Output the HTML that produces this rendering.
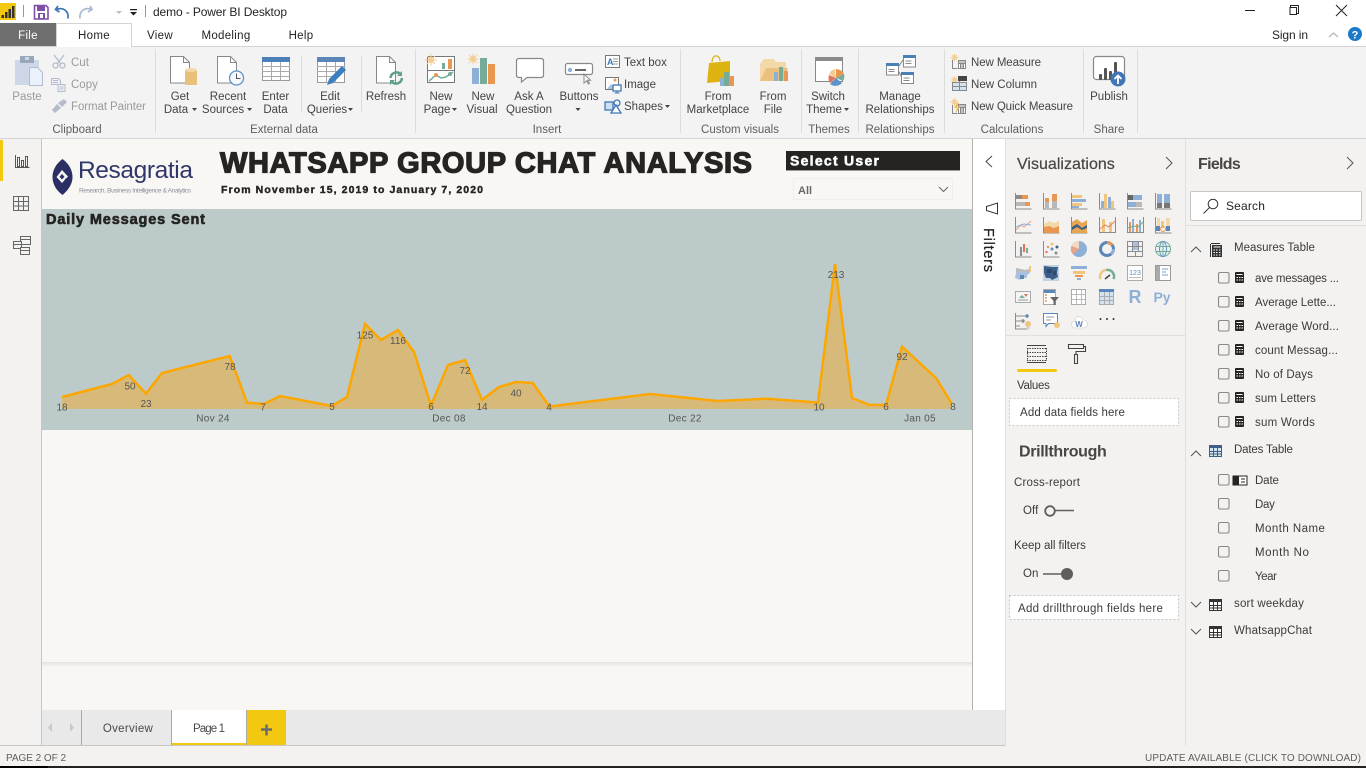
<!DOCTYPE html>
<html><head><meta charset="utf-8"><title>demo - Power BI Desktop</title>
<style>
html,body{margin:0;padding:0;width:1366px;height:768px;overflow:hidden;background:#fff}
svg{display:block;position:absolute;left:0;top:0}
text{font-family:"Liberation Sans",Arial,sans-serif;font-size:11.5px;fill:#444;letter-spacing:0}
.m{text-anchor:middle}
.d{fill:#252423}
.l{fill:#9a9a9a}
.g{fill:#605e5c}
.t{letter-spacing:.3px}
.f{fill:#3b3a39;font-size:11.5px;letter-spacing:.1px}
.h{font-size:16px;font-weight:bold;fill:#484644;letter-spacing:.2px}
.v{font-size:10px;fill:#555;letter-spacing:0}
.blk{font-weight:bold;fill:#252423;stroke:#252423}
</style></head><body>
<svg width="1366" height="768" viewBox="0 0 1366 768" fill="none">
<defs><linearGradient id="sh" x1="0" y1="0" x2="0" y2="1"><stop offset="0" stop-color="#e4e2de"/><stop offset="1" stop-color="#f8f7f3"/></linearGradient></defs>
<!-- backgrounds -->
<rect width="1366" height="768" fill="#fff"/>
<rect x="0" y="47" width="1366" height="91" fill="#f3f3f3"/>
<rect x="0" y="46" width="1366" height="1" fill="#d4d4d4"/>
<rect x="0" y="138" width="1366" height="1" fill="#d4d4d4"/>
<rect x="0" y="139" width="41" height="607" fill="#f3f2f1"/>
<rect x="41" y="139" width="1" height="607" fill="#c8c6c4"/>
<rect x="42" y="139" width="930" height="571" fill="#f8f7f3"/>
<rect x="972" y="139" width="1" height="571" fill="#b3b0ad"/>
<rect x="973" y="139" width="32" height="607" fill="#fff"/>
<rect x="1005" y="139" width="361" height="607" fill="#f3f2f1"/>
<rect x="1005" y="139" width="1" height="607" fill="#e1dfdd"/>
<rect x="1185" y="139" width="1" height="607" fill="#e1dfdd"/>
<rect x="0" y="746" width="1366" height="20" fill="#f3f2f1"/>
<rect x="0" y="745" width="1005" height="1" fill="#c8c6c4"/>
<rect x="0" y="766" width="1366" height="2" fill="#222"/>
<rect x="0" y="766" width="48" height="2" fill="#000"/>
<!-- page shadow -->
<rect x="42" y="662" width="930" height="5" fill="url(#sh)"/>

<!-- title bar -->
<rect x="0" y="3" width="16" height="17" fill="#f2c811"/>
<path d="M1.500 15h2.500v3H1.500zM5 12h2.500v6H5zM8.500 9h2.500v9H8.500zM12 6h2.500v12H12z" fill="#333"/>
<rect x="23" y="5" width="1" height="12" fill="#999"/>
<path d="M34.500 5.500h11.500l2 2v11.500h-13.500z" stroke="#7d4fa8" stroke-width="1.600"/>
<rect x="37" y="6" width="8" height="5" fill="#7d4fa8"/><rect x="38" y="13" width="7" height="6" fill="#7d4fa8"/><rect x="40" y="14" width="3" height="4" fill="#fff"/>
<path d="M58 6l-2.500 3.500 4 2.500M56 9.500c7-2.500 13 1 12 9" stroke="#3f78b5" stroke-width="1.800"/>
<path d="M90 6l2 3.500-4 2.500M92 9.500c-7-2.500-13 1-12 9" stroke="#a9bcd3" stroke-width="1.800"/>
<path d="M116 11h6l-3 3z" fill="#bdbdbd"/>
<path d="M130 9h7v1.200h-7zM130 12h7l-3.500 3.500z" fill="#222"/>
<rect x="145" y="5" width="1" height="12" fill="#999"/>
<text x="153" y="16" class="d" style="font-size:12px" textLength="134">demo - Power BI Desktop</text>
<path d="M1245 10.500h10" stroke="#222"/>
<path d="M1290.500 7.500v-2h8v8h-2M1291 7.500h5.500v7h-6.500v-7z" stroke="#222"/>
<path d="M1336 5l11 11M1347 5l-11 11" stroke="#222"/>
<!-- tabs -->
<rect x="0" y="23" width="56" height="23" fill="#6e6e6e"/>
<path d="M56.500 46v-23h75v23" fill="#fff"/>
<path d="M56.500 46.500v-23h75v23" stroke="#d4d4d4"/>
<rect x="57" y="46" width="74" height="1" fill="#fff"/>
<text x="28" y="39" class="m t" style="fill:#fff">File</text>
<text x="94" y="39" class="m d t">Home</text>
<text x="160" y="39" class="m d t">View</text>
<text x="226" y="39" class="m d t">Modeling</text>
<text x="301" y="39" class="m d t">Help</text>
<text x="1272" y="39" class="d" style="font-size:12px" textLength="36">Sign in</text>
<path d="M1329 37l4.500-4 4.500 4" stroke="#b5b5b5" stroke-width="1.200"/>
<circle cx="1355" cy="34" r="7" fill="#1c79c9"/>
<text x="1355" y="38.500" class="m" style="fill:#fff;font-weight:bold;font-size:11px">?</text>

<!-- ribbon separators -->
<path d="M155.500 49v84M415.500 49v84M680.500 49v84M801.500 49v84M858.500 49v84M944.500 49v84M1083.500 49v84M1137.500 49v84" stroke="#dcdcdc"/>
<path d="M301.500 56v56M361.500 56v56" stroke="#dcdcdc"/>

<!-- clipboard group -->
<rect x="15" y="60" width="24" height="25" fill="#cdd7e8"/>
<rect x="20" y="56" width="14" height="7" fill="#9aa6ba"/><rect x="25" y="57" width="4" height="3" fill="#cdd7e8"/>
<path d="M29.500 67.500h8l5 5v13h-13z" fill="#eaf1fb" stroke="#b3bdd0"/>
<g stroke="#b4bccb" stroke-width="1.300"><circle cx="55.500" cy="65.500" r="2.500"/><circle cx="62.500" cy="65.500" r="2.500"/><path d="M54 55l7 9M64 55l-7 9"/></g>
<path d="M51.500 78.500h7l2 2v4h-9zM58 84.500h7v7h-7z" stroke="#b4bccb" fill="#eef2f8"/>
<path d="M53 80.500h5M53 82.500h5M59.500 87h4M59.500 89h4" stroke="#b4bccb"/>
<path d="M52 110l5-6 4 4-6 5zM58 103l6-4 3 3-5 5z" fill="#b4bccb"/>
<!-- doc icons -->
<path d="M170.500 56.500h13l6 6v20.500h-19z" stroke="#888" fill="#fff"/><path d="M183.500 56.500v6h6" stroke="#888"/>
<rect x="185" y="70" width="12" height="15" rx="1" fill="#e8c07a"/><ellipse cx="191" cy="70" rx="6" ry="2" fill="#f3d9a8"/>
<path d="M217.500 56.500h13l6 6v20.500h-19z" stroke="#888" fill="#fff"/><path d="M230.500 56.500v6h6" stroke="#888"/>
<circle cx="236.500" cy="78" r="7" fill="#f5f8fc" stroke="#5b93c9" stroke-width="1.300"/><path d="M236.500 73.500v5h4" stroke="#555"/>
<rect x="262.500" y="57.500" width="27" height="23" fill="#fff" stroke="#999"/><rect x="262" y="57" width="28" height="5" fill="#4a7fb8"/>
<path d="M262 66.500h28M262 71.500h28M262 76.500h28M271.500 62v19M280.500 62v19" stroke="#aaa"/>
<rect x="317.500" y="57.500" width="27" height="25" fill="#fff" stroke="#999"/><rect x="317" y="57" width="28" height="5" fill="#5b86b8"/>
<path d="M317 66.500h28M317 71.500h28M317 76.500h20M326.500 62v21M335.500 62v21" stroke="#aaa"/>
<path d="M327 85l2-6 13-13 4 4-13 13z" fill="#3c7fc0"/>
<path d="M376.500 56.500h13l6 6v20.500h-19z" stroke="#888" fill="#fff"/><path d="M389.500 56.500v6h6" stroke="#888"/>
<path d="M390.500 78a6 6 0 0 1 10-4M402 78a6 6 0 0 1-10 4" stroke="#5fa08a" stroke-width="2.500"/><path d="M402 71v5h-5zM390 85v-5h5z" fill="#5fa08a"/>
<!-- insert icons -->
<rect x="427.500" y="56.500" width="27" height="26" fill="#fff" stroke="#777"/><path d="M427 70.500h28" stroke="#777"/>
<circle cx="431" cy="60" r="3" fill="#f3cd94"/><path d="M431 54v12M425 60h12M427 56l8 8M435 56l-8 8" stroke="#f3cd94"/>
<rect x="442" y="63" width="3" height="6" fill="#74ac98"/><rect x="448" y="59" width="4" height="10" fill="#ea9550"/>
<path d="M429 81l7-6 5 3 5-1 7-5" stroke="#74ac98" stroke-width="1.500"/><circle cx="436" cy="75" r="2" fill="#ea9550"/><circle cx="450" cy="74" r="2" fill="#74ac98"/>
<circle cx="473" cy="59" r="3" fill="#f3cd94"/><path d="M473 53.500v11M467.500 59h11M469 55l8 8M477 55l-8 8" stroke="#f3cd94"/>
<rect x="472" y="68" width="7" height="16" fill="#8fb0d6"/><rect x="480" y="58" width="7" height="26" fill="#74ac98"/><rect x="488" y="64" width="7" height="20" fill="#ea9550"/>
<path d="M519 58.500h22q2.500 0 2.500 2.500v14q0 2.500-2.500 2.500h-14l-5.500 4.500v-4.500h-2.500q-2.500 0-2.500-2.500v-14q0-2.500 2.500-2.500z" stroke="#888" fill="#fff" stroke-width="1.200"/>
<rect x="565.500" y="63.500" width="27" height="11" rx="2" fill="#fff" stroke="#888" stroke-width="1.200"/><circle cx="570" cy="70" r="2.200" fill="#8fb0d6"/><path d="M575 70h11" stroke="#666" stroke-width="2"/>
<path d="M584 74v9l2.500-2 2 3 1-.7-2-3h3z" fill="#fff" stroke="#888"/>
<path d="M605.500 55.500h14v12h-14z" fill="#fff" stroke="#777"/><text x="607" y="65" style="font-size:9px;fill:#3f78b5;font-weight:bold">A</text><path d="M613 59h5M613 61.500h5M613 64h5" stroke="#999"/>
<path d="M605.500 77.500h13v12h-13z" fill="#fff" stroke="#777"/><path d="M607 89l4-5 4 5z" fill="#a7c1de"/><circle cx="615" cy="80" r="1.500" fill="#ea9550"/><rect x="613" y="85" width="8" height="6" fill="#fff" stroke="#3f78b5" stroke-width="1.300"/><path d="M617 91v2M614.500 93h5" stroke="#3f78b5"/>
<rect x="605" y="102" width="8" height="8" fill="#cfe0f1" stroke="#3f78b5" stroke-width="1.300"/><circle cx="617" cy="103" r="3" fill="none" stroke="#3f78b5" stroke-width="1.300"/><path d="M611 113l5-8 5 8z" fill="#fff" stroke="#3f78b5" stroke-width="1.300"/>
<!-- custom visuals -->
<path d="M709 63l21-2 0 20-23 2z" fill="#dcb310"/><path d="M712 62c0-8 8-8 8-1" stroke="#dcb310" stroke-width="1.200"/>
<rect x="720" y="78" width="4" height="8" fill="#8fb0d6"/><rect x="724" y="72" width="5" height="14" fill="#74ac98"/><rect x="729" y="76" width="5" height="10" fill="#ea9550"/>
<path d="M760 81v-17l4-5h10l2 3h10v19z" fill="#f3d9a8"/><path d="M760 81l6-13h22l-5 13z" fill="#ecc17f"/>
<rect x="774" y="72" width="4" height="9" fill="#8fb0d6"/><rect x="779" y="67" width="4" height="14" fill="#74ac98"/><rect x="784" y="71" width="4" height="10" fill="#ea9550"/>
<!-- themes / relations -->
<rect x="815.500" y="57.500" width="27" height="24" fill="#fff" stroke="#888"/><rect x="815" y="57" width="28" height="4" fill="#8a8a8a"/>
<path d="M836 78l0-9a9 9 0 0 1 8 5z" fill="#ea9550"/><path d="M836 78l8-4a9 9 0 0 1-1 7z" fill="#74ac98"/><path d="M836 78l6 5a9 9 0 0 1-12 1z" fill="#5b93c9"/><path d="M836 78l-6 5a9 9 0 0 1-1-8z" fill="#e0735a"/><path d="M836 78l-7-4a9 9 0 0 1 6-5z" fill="#f3cd94"/>
<g stroke="#888" fill="#fff"><rect x="886.500" y="63.500" width="12" height="11.500"/><rect x="903.500" y="55.500" width="12" height="11.500"/><rect x="901.500" y="72.500" width="12" height="11"/></g>
<rect x="886" y="63" width="13" height="3" fill="#4a7fb8"/><rect x="903" y="55" width="13" height="3" fill="#4a7fb8"/><rect x="901" y="72" width="13" height="3" fill="#4a7fb8"/>
<path d="M899 66l4-6M899 72l2 4M888.500 69.500h6M888.500 71.500h6M905.500 61h6M905.500 63.500h6M903.500 78h6M903.500 80.500h6" stroke="#888"/>
<!-- calc icons -->
<circle cx="954.500" cy="57.500" r="2" fill="#f3cd94"/><path d="M954.500 53.500v8M950.500 57.500h8M952 55l5 5M957 55l-5 5" stroke="#f3cd94"/>
<path d="M952.500 60v8.500h5" stroke="#888"/><rect x="958" y="60" width="8" height="9" fill="#888"/><path d="M959 62h6" stroke="#fff"/><path d="M959.500 64v4M962 64v4M964.500 64v4" stroke="#fff"/>
<circle cx="954.500" cy="80" r="2" fill="#f3cd94"/><path d="M954.500 76v8M950.500 80h8M952 77.500l5 5M957 77.500l-5 5" stroke="#f3cd94"/>
<rect x="952.500" y="82.500" width="14" height="8" fill="#d5e3f1" stroke="#888"/><rect x="958" y="76" width="9" height="5" fill="#444"/><path d="M959.500 81v9M952 86.500h14" stroke="#888"/>
<circle cx="954.500" cy="102" r="2" fill="#f3cd94"/><path d="M954.500 98v8M950.500 102h8M952 99.500l5 5M957 99.500l-5 5" stroke="#f3cd94"/>
<path d="M952.500 105v8.500h5" stroke="#888"/><rect x="958" y="104" width="8" height="10" fill="#888"/><path d="M959 106h6M959.500 108v5M962 108v5M964.500 108v5" stroke="#fff"/><path d="M957 103l-3 5h3l-2 6 5-7h-3l2-4z" fill="#edb95e"/>
<!-- publish -->
<rect x="1093.500" y="56.500" width="31" height="23" rx="3" stroke="#888" stroke-width="1.200" fill="#fff"/>
<rect x="1099" y="74" width="3" height="6" fill="#555" rx="1"/><rect x="1104" y="68" width="3" height="12" fill="#555" rx="1"/><rect x="1109" y="71" width="3" height="9" fill="#555" rx="1"/><rect x="1114" y="62" width="3" height="18" fill="#555" rx="1"/>
<circle cx="1118" cy="79" r="7.500" fill="#3f78b5"/><path d="M1118 84v-8M1114.500 79l3.500-3.500 3.500 3.500" stroke="#fff" stroke-width="1.800"/>

<!-- ribbon text -->
<g>
<text x="27" y="100" class="m l">Paste</text>
<text x="71" y="66" class="l">Cut</text><text x="71" y="88" class="l">Copy</text><text x="71" y="110" class="l" textLength="75">Format Painter</text>
<text x="77" y="133" class="m g">Clipboard</text>
<text x="180" y="100" class="m">Get</text><text x="176" y="113" class="m">Data</text><path d="M192 108h5l-2.500 3z" fill="#444"/>
<text x="228" y="100" class="m">Recent</text><text x="223" y="113" class="m">Sources</text><path d="M247 108h5l-2.500 3z" fill="#444"/>
<text x="275.500" y="100" class="m">Enter</text><text x="275.500" y="113" class="m">Data</text>
<text x="330" y="100" class="m">Edit</text><text x="327" y="113" class="m">Queries</text><path d="M348 108h5l-2.500 3z" fill="#444"/>
<text x="386" y="100" class="m">Refresh</text>
<text x="284" y="133" class="m g">External data</text>
<text x="441" y="100" class="m">New</text><text x="437" y="113" class="m">Page</text><path d="M452 108h5l-2.500 3z" fill="#444"/>
<text x="483" y="100" class="m">New</text><text x="482" y="113" class="m">Visual</text>
<text x="529" y="100" class="m">Ask A</text><text x="529" y="113" class="m">Question</text>
<text x="579" y="100" class="m">Buttons</text><path d="M575.500 108h5l-2.500 3z" fill="#444"/>
<text x="624" y="66">Text box</text><text x="624" y="88">Image</text><text x="624" y="110">Shapes</text><path d="M665 105h5l-2.500 3z" fill="#444"/>
<text x="547" y="133" class="m g">Insert</text>
<text x="718" y="100" class="m">From</text><text x="718" y="113" class="m">Marketplace</text>
<text x="773" y="100" class="m">From</text><text x="773" y="113" class="m">File</text>
<text x="740" y="133" class="m g">Custom visuals</text>
<text x="828" y="100" class="m">Switch</text><text x="824" y="113" class="m">Theme</text><path d="M844 108h5l-2.500 3z" fill="#444"/>
<text x="829" y="133" class="m g">Themes</text>
<text x="900" y="100" class="m">Manage</text><text x="900" y="113" class="m">Relationships</text>
<text x="900" y="133" class="m g">Relationships</text>
<text x="971" y="66" textLength="70">New Measure</text><text x="971" y="88" textLength="66">New Column</text><text x="971" y="110" textLength="102">New Quick Measure</text>
<text x="1012" y="133" class="m g">Calculations</text>
<text x="1109" y="100" class="m">Publish</text>
<text x="1109" y="133" class="m g">Share</text>
</g>

<!-- left rail -->
<rect x="0" y="140" width="3" height="41" fill="#f2c811"/>
<g stroke="#555"><path d="M15.500 155v12.500h14"/><rect x="17.500" y="157.500" width="2" height="9"/><rect x="21.500" y="160.500" width="2" height="6"/><rect x="25.500" y="156.500" width="2" height="10"/></g>
<g stroke="#666"><rect x="13.500" y="196.500" width="15" height="14"/><path d="M13 201.500h16M13 206h16M18.500 197v14M23.500 197v14"/></g>
<g stroke="#666" fill="#f3f2f1"><rect x="20.500" y="236.500" width="10" height="8"/><rect x="13.500" y="241.500" width="8" height="7"/><rect x="20.500" y="247.500" width="9" height="7"/><path d="M21 239.500h9M14 244.500h7M21 250.500h8"/></g>

<!-- report header -->
<path d="M62.500 159c7 5 10 12 10 18s-3 12-10 18c-7-5-10-12-10-18s3-13 10-18z" fill="#2b2f63"/>
<path d="M62 170l6 6.500-6 6.500-5.500-6zM62 174l-2.500 2.800 2.500 2.700 2.500-2.700z" fill="#f8f7f3" fill-rule="evenodd"/>
<path d="M66 178l3 3-7 8-2-2z" fill="#2b2f63"/>
<text x="78" y="178" style="font-size:24.500px;fill:#30376a" textLength="115">Resagratia</text>
<text x="79" y="192.500" style="font-size:6.500px;fill:#8b8e9a" textLength="112">Research, Business Intelligence &amp; Analytics</text>
<text x="220" y="172.500" class="blk" style="font-size:29px;stroke-width:1.300px" textLength="532">WHATSAPP GROUP CHAT ANALYSIS</text>
<text x="221" y="193" class="blk" style="font-size:10.500px;stroke-width:.4px" textLength="262">From November 15, 2019 to January 7, 2020</text>
<rect x="786" y="151" width="174" height="19" fill="#252423"/><rect x="786" y="170" width="174" height="1" fill="#9b9a96"/>
<text x="790" y="165.500" style="font-size:14px;font-weight:bold;fill:#fff;stroke:#fff;stroke-width:.5px" textLength="89">Select User</text>
<rect x="793.500" y="178.500" width="159" height="21" stroke="#efeeea"/>
<text x="798" y="194" style="font-weight:bold;font-size:11px;fill:#6b6966">All</text>
<path d="M939 187l4.500 4.500 4.500-4.500" stroke="#666"/>

<!-- chart -->
<rect x="42" y="209" width="930" height="221" fill="#bdcaca"/>
<text x="46" y="224" class="blk" style="font-size:14.500px;stroke-width:.6px" textLength="159">Daily Messages Sent</text>
<path d="M62 397L112 384L128.700 375L146 393.700L162 373L229.700 356L247 402.700L264 404L280 396L332 406L347 397L365 324L381 340L398 330L414 352L431 405.500L448 365L465 360L482 400L499 387L516 382L532.700 383L549.500 406.500L650 394L718 401L767 398.700L818 402.500L835 264L852 398L869 404.700L886 405L902 346.700L936 378L952 404V409H62Z" fill="#d7ba7a"/>
<path d="M62 397L112 384L128.700 375L146 393.700L162 373L229.700 356L247 402.700L264 404L280 396L332 406L347 397L365 324L381 340L398 330L414 352L431 405.500L448 365L465 360L482 400L499 387L516 382L532.700 383L549.500 406.500L650 394L718 401L767 398.700L818 402.500L835 264L852 398L869 404.700L886 405L902 346.700L936 378L952 404" stroke="#fca700" stroke-width="2.500" stroke-linejoin="miter"/>
<g>
<text x="62" y="410.500" class="m v">18</text><text x="130" y="389.500" class="m v">50</text><text x="146" y="407" class="m v">23</text><text x="230" y="370" class="m v">78</text><text x="263" y="410.500" class="m v">7</text><text x="332" y="410" class="m v">5</text><text x="365" y="338.500" class="m v">125</text><text x="398" y="344" class="m v">116</text><text x="431" y="410" class="m v">6</text><text x="465" y="374" class="m v">72</text><text x="482" y="410" class="m v">14</text><text x="516" y="396.500" class="m v">40</text><text x="549" y="410.500" class="m v">4</text><text x="819" y="410.500" class="m v">10</text><text x="836" y="278" class="m v">213</text><text x="886" y="410" class="m v">6</text><text x="902" y="360" class="m v">92</text><text x="953" y="410" class="m v">8</text>
<text x="213" y="421.500" class="m v" style="letter-spacing:.3px">Nov 24</text><text x="449" y="421.500" class="m v" style="letter-spacing:.3px">Dec 08</text><text x="685" y="421.500" class="m v" style="letter-spacing:.3px">Dec 22</text><text x="920" y="421.500" class="m v" style="letter-spacing:.3px">Jan 05</text>
</g>

<!-- page tabs -->
<rect x="42" y="710" width="963" height="35" fill="#e9e9e9"/>
<path d="M52 723v9l-4-4.500zM70 723v9l4-4.500z" fill="#c8c8c8"/>
<rect x="81" y="710" width="1" height="35" fill="#aaa"/>
<text x="128" y="732" class="m t" style="fill:#4a4a4a">Overview</text>
<rect x="171" y="710" width="76" height="35" fill="#fff"/><rect x="171" y="710" width="1" height="35" fill="#aaa"/><rect x="246" y="710" width="1" height="35" fill="#aaa"/>
<rect x="172" y="743" width="74" height="2" fill="#f2c811"/>
<text x="193" y="732" style="fill:#4a4a4a" textLength="32">Page 1</text>
<rect x="247" y="710" width="39" height="35" fill="#f2c811"/>
<path d="M261 729.500h11M266.500 724.500v11" stroke="#6b6b6b" stroke-width="2.500"/>
<text x="6" y="761" class="g" textLength="60" style="font-size:10px">PAGE 2 OF 2</text>
<text x="1145" y="761" class="g" textLength="216" style="font-size:10px">UPDATE AVAILABLE (CLICK TO DOWNLOAD)</text>

<!-- filters -->
<path d="M992 156l-6 5.500 6 5.500" stroke="#444"/>
<path d="M986.500 206.500l11-3.500v11l-11-3.500v-1z" stroke="#333"/>
<text transform="translate(984 228) rotate(90)" style="font-size:14.500px;fill:#252423;stroke:#252423;stroke-width:.25px" textLength="44">Filters</text>

<!-- visualizations -->
<text x="1017" y="169" class="h" style="font-weight:normal;stroke:#484644;stroke-width:.2px" textLength="98">Visualizations</text>
<path d="M1166 157l6 6-6 6" stroke="#555"/>
<g stroke-width="1">
<!-- r1 -->
<g transform="translate(1015 193)"><path d="M.5 0v16h16" stroke="#8c8c8c"/><rect x="1" y="2" width="6" height="4" fill="#8c8c8c"/><rect x="7" y="2" width="6" height="4" fill="#ea9550"/><rect x="1" y="9" width="9" height="4" fill="#b8b8b8"/><rect x="10" y="9" width="5" height="4" fill="#ea9550"/></g>
<g transform="translate(1043 193)"><path d="M.5 0v16h16" stroke="#8c8c8c"/><rect x="2" y="9" width="4" height="6" fill="#b8b8b8"/><rect x="2" y="5" width="4" height="4" fill="#ea9550"/><rect x="9" y="8" width="5" height="7" fill="#b8b8b8"/><rect x="9" y="1" width="5" height="7" fill="#ea9550"/></g>
<g transform="translate(1071 193)"><path d="M.5 0v16h16" stroke="#8c8c8c"/><rect x="1" y="2" width="10" height="3" fill="#f0c67f"/><rect x="1" y="6" width="14" height="3" fill="#8fb0d6"/><rect x="1" y="10" width="10" height="3" fill="#f0c67f"/><rect x="1" y="13" width="7" height="2" fill="#8fb0d6"/></g>
<g transform="translate(1099 193)"><path d="M.5 0v16h16" stroke="#8c8c8c"/><rect x="2" y="8" width="3" height="7" fill="#8fb0d6"/><rect x="5" y="1" width="3" height="14" fill="#f0c67f"/><rect x="9" y="4" width="3" height="11" fill="#8fb0d6"/><rect x="12" y="8" width="3" height="7" fill="#f0c67f"/></g>
<g transform="translate(1127 193)"><path d="M.5 0v16h16" stroke="#8c8c8c"/><rect x="1" y="2" width="5" height="5" fill="#666"/><rect x="6" y="2" width="9" height="5" fill="#8fb0d6"/><rect x="1" y="9" width="8" height="5" fill="#8fb0d6"/><rect x="9" y="9" width="6" height="5" fill="#b8b8b8"/></g>
<g transform="translate(1155 193)"><path d="M.5 0v16h16" stroke="#8c8c8c"/><rect x="2" y="1" width="5" height="9" fill="#8fb0d6"/><rect x="2" y="10" width="5" height="5" fill="#777"/><rect x="9" y="1" width="6" height="9" fill="#8fb0d6"/><rect x="9" y="10" width="6" height="5" fill="#777"/></g>
<!-- r2 -->
<g transform="translate(1015 217)"><path d="M.5 0v16h16" stroke="#8c8c8c"/><path d="M1 13l5-5 3 2 7-6" stroke="#e8a38a"/><path d="M1 10l5-2 3-1 7 1" stroke="#8fb0d6"/></g>
<g transform="translate(1043 217)"><path d="M.5 0v16h16" stroke="#8c8c8c"/><path d="M1 7l5-3 5 2 5-2v12H1z" fill="#f3d9a8"/><path d="M1 10l5-1 5 2 5-2v7H1z" fill="#ea9550"/></g>
<g transform="translate(1071 217)"><path d="M.5 0v16h16" stroke="#8c8c8c"/><path d="M1 5l5-3 5 4 5-3v13H1z" fill="#e8a552"/><path d="M1 10l5-3 5 4 5-3v3l-5 2-5-3-5 3z" fill="#3d5f87"/></g>
<g transform="translate(1099 217)"><path d="M.5 0v16M.5 15.500h16M16.500 0v16" stroke="#8c8c8c"/><rect x="3" y="2" width="3" height="13" fill="#f0c67f"/><rect x="10" y="5" width="3" height="10" fill="#f0c67f"/><path d="M1 12l5-4 4 2 6-6" stroke="#e8835a"/></g>
<g transform="translate(1127 217)"><path d="M.5 0v16M.5 15.500h16M16.500 0v16" stroke="#8c8c8c"/><rect x="2" y="5" width="2" height="10" fill="#ea9550"/><rect x="5" y="2" width="2" height="13" fill="#8fb0d6"/><rect x="9" y="7" width="2" height="8" fill="#ea9550"/><rect x="12" y="3" width="2" height="12" fill="#8fb0d6"/><path d="M1 11l6-2 4 1 5-5" stroke="#74ac98"/></g>
<g transform="translate(1155 217)"><path d="M.5 0v16h16" stroke="#8c8c8c"/><rect x="2" y="1" width="3" height="8" fill="#f3d9a8"/><rect x="6" y="4" width="3" height="7" fill="#f0c67f"/><rect x="11" y="1" width="4" height="8" fill="#f3d9a8"/><rect x="1" y="9" width="4" height="5" fill="#5b86b8"/><rect x="11" y="9" width="4" height="5" fill="#5b86b8"/><circle cx="8" cy="12" r="2.500" stroke="#ea9550"/></g>
<!-- r3 -->
<g transform="translate(1015 241)"><path d="M.5 0v16h16" stroke="#8c8c8c"/><rect x="3" y="3" width="12" height="12" fill="#eee"/><rect x="5" y="6" width="2" height="9" fill="#8c8c8c"/><rect x="8" y="3" width="2" height="8" fill="#e0735a"/><rect x="11" y="7" width="2" height="5" fill="#74ac98"/></g>
<g transform="translate(1043 241)"><path d="M.5 0v16h16" stroke="#8c8c8c"/><circle cx="3.500" cy="11" r="1.200" fill="#e0735a"/><circle cx="5" cy="6" r="1.200" fill="#ea9550"/><circle cx="9" cy="3" r="1.500" fill="#f0c67f"/><circle cx="9" cy="8" r="1.500" fill="#5b93c9"/><circle cx="14" cy="6" r="1.500" fill="#3d5f87"/><circle cx="13" cy="12" r="1.500" fill="#8c8c8c"/></g>
<g transform="translate(1071 241)"><circle cx="8" cy="8" r="8" fill="#8fb0d6"/><path d="M8 8L8 0A8 8 0 0 0 .5 5z" fill="#f3d9c0"/><path d="M8 8L.5 5A8 8 0 0 0 2 13.500z" fill="#e8a38a"/></g>
<g transform="translate(1099 241)"><circle cx="8" cy="8" r="6.500" stroke="#5b86b8" stroke-width="3"/><path d="M8 1.500A6.500 6.500 0 0 1 13 4" stroke="#ea9550" stroke-width="3"/><path d="M14.500 8A6.500 6.500 0 0 1 12 13" stroke="#8fb0d6" stroke-width="3"/></g>
<g transform="translate(1127 241)"><rect x=".5" y=".5" width="15" height="15" stroke="#8c8c8c"/><rect x="5" y="1" width="7" height="8" fill="#a7c1de"/><path d="M1 5.500h15M1 10.500h15M5.500 1v9M11.500 1v9M8.500 10v6" stroke="#8c8c8c"/></g>
<g transform="translate(1155 241)"><circle cx="8" cy="8" r="7.500" fill="#e8f0f0" stroke="#74ac98"/><ellipse cx="8" cy="8" rx="3.500" ry="7.500" stroke="#5b93c9"/><path d="M1 5.500h14M1 10.500h14M8 1v14" stroke="#74ac98"/></g>
<!-- r4 -->
<g transform="translate(1015 265)"><path d="M1 3l5 1 4 1 5-1 1-3-1 7-3 2 0 3-5 0-2 2-5-2 1-5z" fill="#a7c1de"/><path d="M1 3l9 2 5-1v3H2z" fill="#bbb"/><path d="M14 1h2v6h-2z" fill="#f0c67f"/><rect x="5" y="10" width="4" height="4" fill="#5b86b8"/></g>
<g transform="translate(1043 265)"><path d="M0 0h16v16H0z" fill="#c3d3e6"/><path d="M1 1l8 1 6 0-1 6 1 4-6 3-2-2-4 0-2-5z" fill="#3d5f87"/><path d="M4 4h5v4H4zM10 6h3v4h-3z" fill="#2b4a70"/></g>
<g transform="translate(1071 265)"><rect x="0" y="1" width="16" height="3" fill="#8fb0d6"/><rect x="2" y="6" width="12" height="3" fill="#f0c67f"/><rect x="4" y="10" width="8" height="2" fill="#ea9550"/><rect x="6" y="13" width="4" height="2" fill="#8fb0d6"/></g>
<g transform="translate(1099 265)"><path d="M1.500 14a6.500 6.500 0 0 1 6-9" stroke="#f0c67f" stroke-width="2.500"/><path d="M7.500 5a6.500 6.500 0 0 1 7 9" stroke="#74ac98" stroke-width="2.500"/><path d="M6 14l5-4" stroke="#444" stroke-width="1.500"/></g>
<g transform="translate(1127 265)"><rect x=".5" y=".5" width="15" height="15" stroke="#aaa" fill="#fff"/><text x="8" y="10" class="m" style="font-size:7px;fill:#5b86b8">123</text><path d="M2 12.500h12" stroke="#bbb"/></g>
<g transform="translate(1155 265)"><rect x=".5" y=".5" width="15" height="15" stroke="#999" fill="#fff"/><rect x="1" y="1" width="4" height="14" fill="#aaa"/><path d="M7 4h6M7 7h4M7 10h6" stroke="#8fb0d6" stroke-width="1.300"/></g>
<!-- r5 -->
<g transform="translate(1015 289)"><rect x=".5" y="2.500" width="15" height="11" stroke="#aaa" fill="#f5f5f5"/><path d="M4 9l3-3 3 3z" fill="#74ac98"/><path d="M9 5h4l-2 3z" fill="#e0735a"/><path d="M3 11h10" stroke="#999"/></g>
<g transform="translate(1043 289)"><rect x=".5" y=".5" width="12" height="15" stroke="#aaa" fill="#fff"/><rect x="1" y="1" width="11" height="3" fill="#5b86b8"/><path d="M2 6h2M2 9h2M2 12h2" stroke="#ea9550" stroke-width="1.500"/><path d="M7 8h9l-3.500 4v4h-2v-4z" fill="#666"/></g>
<g transform="translate(1071 289)"><rect x=".5" y=".5" width="14" height="15" stroke="#aaa" fill="#fff"/><path d="M1 5.500h14M1 10.500h14M5.500 1v15M10.500 1v15" stroke="#bbb"/></g>
<g transform="translate(1099 289)"><rect x=".5" y=".5" width="14" height="15" stroke="#aaa" fill="#d5e3f1"/><rect x="0" y="0" width="15" height="3" fill="#5b86b8"/><path d="M1 7.500h14M1 11.500h14M5.500 3v13M10.500 3v13" stroke="#aaa"/></g>
<text x="1135" y="303" class="m" style="font-size:18px;font-weight:bold;fill:#8fb0d6">R</text>
<text x="1162" y="302" class="m" style="font-size:14px;font-weight:bold;fill:#8fb0d6">Py</text>
<!-- r6 -->
<g transform="translate(1015 313)"><path d="M.5 0v16h12" stroke="#8c8c8c"/><path d="M1 3h9M1 8h5M1 13h4" stroke="#8c8c8c"/><circle cx="12" cy="3" r="1.700" fill="#5b86b8"/><circle cx="8" cy="8" r="1.700" fill="#8c8c8c"/><circle cx="13" cy="11" r="3" fill="#f0c67f"/><rect x="11.500" y="14" width="3" height="2" fill="#ccc"/></g>
<g transform="translate(1043 313)"><path d="M.5 .5h14v10h-9l-2.500 3v-3H.5z" stroke="#5b86b8" fill="#fff"/><path d="M3 4h8M3 7h5" stroke="#999"/><circle cx="14" cy="12" r="3" fill="#f0c67f"/></g>
<g transform="translate(1071 313)"><path d="M4 15a3.500 3.500 0 0 1 0-7 4 4 0 0 1 8-1 4 4 0 0 1 1 8z" fill="#fff" stroke="#ddd"/><text x="8" y="14" class="m" style="font-size:8px;font-weight:bold;fill:#5b86b8">W</text></g>
<circle cx="1100.500" cy="319" r="1" fill="#333"/><circle cx="1107" cy="319" r="1" fill="#333"/><circle cx="1113.500" cy="319" r="1" fill="#333"/>
</g>
<rect x="1006" y="335" width="179" height="1" fill="#e1dfdd"/>
<g stroke="#444"><path d="M1027 345.500h19M1027 362.500h19"/><path d="M1027 348.500h19M1027 352.500h19M1027 356.500h19M1027 360.500h19" stroke-dasharray="1.500 1"/><path d="M1027.500 348v13M1046.500 348v13" stroke-dasharray="1.500 1"/></g>
<rect x="1017" y="369" width="40" height="3" rx="1.500" fill="#f2c811"/>
<path d="M1068.500 344.500h15v4h-15zM1083.500 346.500h2v5h-9.500v3M1074.500 354.500h3v9h-3z" stroke="#444" stroke-width="1.100" fill="#f3f2f1"/>
<text x="1017" y="389" class="f" textLength="33">Values</text>
<rect x="1009.500" y="398.500" width="169" height="27" fill="#fff" stroke="#c8c6c4" stroke-dasharray="2 2"/>
<text x="1020" y="416" class="f" textLength="105">Add data fields here</text>
<text x="1019" y="456.500" class="h" textLength="88">Drillthrough</text>
<text x="1014" y="486" class="f" textLength="66">Cross-report</text>
<text x="1023" y="514" class="f">Off</text>
<path d="M1055 510.500h19" stroke="#605e5c" stroke-width="1.600"/><circle cx="1050" cy="511" r="4.800" stroke="#605e5c" stroke-width="1.800"/>
<text x="1014" y="549" class="f" textLength="72">Keep all filters</text>
<text x="1023" y="577" class="f">On</text>
<path d="M1043 574h20" stroke="#605e5c" stroke-width="1.600"/><circle cx="1067" cy="574" r="6" fill="#605e5c"/>
<rect x="1009.500" y="595.500" width="169" height="24" fill="#fff" stroke="#c8c6c4" stroke-dasharray="2 2"/>
<text x="1018" y="612" class="f" textLength="145">Add drillthrough fields here</text>

<!-- fields -->
<text x="1198" y="169" class="h" textLength="43">Fields</text>
<path d="M1347 157l6 6-6 6" stroke="#555"/>
<rect x="1190.500" y="191.500" width="171" height="29" fill="#fff" stroke="#c8c6c4" rx="1"/>
<circle cx="1213" cy="204" r="4.800" stroke="#333"/><path d="M1209.500 207.500l-6 6" stroke="#333"/>
<text x="1226" y="210" class="f" style="fill:#252423;font-size:12px" textLength="39">Search</text>
<rect x="1186" y="225" width="180" height="1" fill="#e1dfdd"/>
<path d="M1191 252l5-5 5 5" stroke="#555"/>
<rect x="1212" y="245" width="10" height="12" fill="#333"/><path d="M1210.500 244v13M1211 243.500h9" stroke="#333"/><path d="M1213.500 247h7" stroke="#fff"/><path d="M1213.500 250h1.500M1216 250h1.500M1219 250h1.500M1213.500 252.500h1.500M1216 252.500h1.500M1219 252.500h1.500M1213.500 255h1.500M1216 255h1.500M1219 255h1.500" stroke="#fff"/>
<text x="1234" y="251" class="f" textLength="81">Measures Table</text>

<defs>
<g id="calc"><rect x="0" y="0" width="9" height="11" rx="1" fill="#252423"/><path d="M1.500 2.500h6" stroke="#fff"/><path d="M1.500 5.500h1.500M4 5.500h1.500M6.500 5.500h1.500M1.500 8h1.500M4 8h1.500M6.500 8h1.500" stroke="#fff"/></g>
<rect id="cb" x=".5" y=".5" width="10.500" height="10.500" rx="1.500" fill="none" stroke="#8a8886" stroke-width="1.100"/>
<g id="tbl"><rect x=".5" y=".5" width="12" height="11" fill="#fff" stroke="#333"/><rect x="0" y="0" width="13" height="3" fill="#333"/><path d="M0 6.500h13M0 9h13M4.500 3v9M8.500 3v9" stroke="#333"/></g>
</defs>
<use href="#cb" x="1218" y="272"/><use href="#calc" x="1235" y="272"/><text x="1255" y="282" class="f" textLength="84">ave messages ...</text>
<use href="#cb" x="1218" y="296"/><use href="#calc" x="1235" y="296"/><text x="1255" y="306" class="f" textLength="81">Average Lette...</text>
<use href="#cb" x="1218" y="320"/><use href="#calc" x="1235" y="320"/><text x="1255" y="330" class="f" textLength="84">Average Word...</text>
<use href="#cb" x="1218" y="344"/><use href="#calc" x="1235" y="344"/><text x="1255" y="354" class="f" textLength="83">count Messag...</text>
<use href="#cb" x="1218" y="368"/><use href="#calc" x="1235" y="368"/><text x="1255" y="378" class="f" textLength="58">No of Days</text>
<use href="#cb" x="1218" y="392"/><use href="#calc" x="1235" y="392"/><text x="1255" y="402" class="f" textLength="61">sum Letters</text>
<use href="#cb" x="1218" y="416"/><use href="#calc" x="1235" y="416"/><text x="1255" y="426" class="f" textLength="60">sum Words</text>

<path d="M1191 456l5-5 5 5" stroke="#555"/>
<rect x="1209.500" y="445.500" width="12" height="11" fill="#d5e3f1" stroke="#3d5f87"/><rect x="1209" y="445" width="13" height="3" fill="#3d5f87"/><path d="M1209 451.500h13M1209 454h13M1213.500 448v9M1217.500 448v9" stroke="#3d5f87"/>
<text x="1234" y="453" class="f" textLength="59">Dates Table</text>
<use href="#cb" x="1218" y="474"/><rect x="1233" y="476" width="14" height="9" fill="#fff" stroke="#252423"/><rect x="1233" y="476" width="6" height="9" fill="#252423"/><path d="M1241 479h4M1241 482h4" stroke="#252423"/><text x="1255" y="484" class="f" textLength="24">Date</text>
<use href="#cb" x="1218" y="498"/><text x="1255" y="508" class="f" textLength="20">Day</text>
<use href="#cb" x="1218" y="522"/><text x="1255" y="532" class="f" textLength="70">Month Name</text>
<use href="#cb" x="1218" y="546"/><text x="1255" y="556" class="f" textLength="54">Month No</text>
<use href="#cb" x="1218" y="570"/><text x="1255" y="580" class="f" textLength="22">Year</text>
<path d="M1191 602l5 5 5-5" stroke="#555"/><use href="#tbl" x="1209" y="599"/><text x="1234" y="607" class="f" textLength="70">sort weekday</text>
<path d="M1191 629l5 5 5-5" stroke="#555"/><use href="#tbl" x="1209" y="626"/><text x="1234" y="634" class="f" textLength="78">WhatsappChat</text>
</svg>
</body></html>
